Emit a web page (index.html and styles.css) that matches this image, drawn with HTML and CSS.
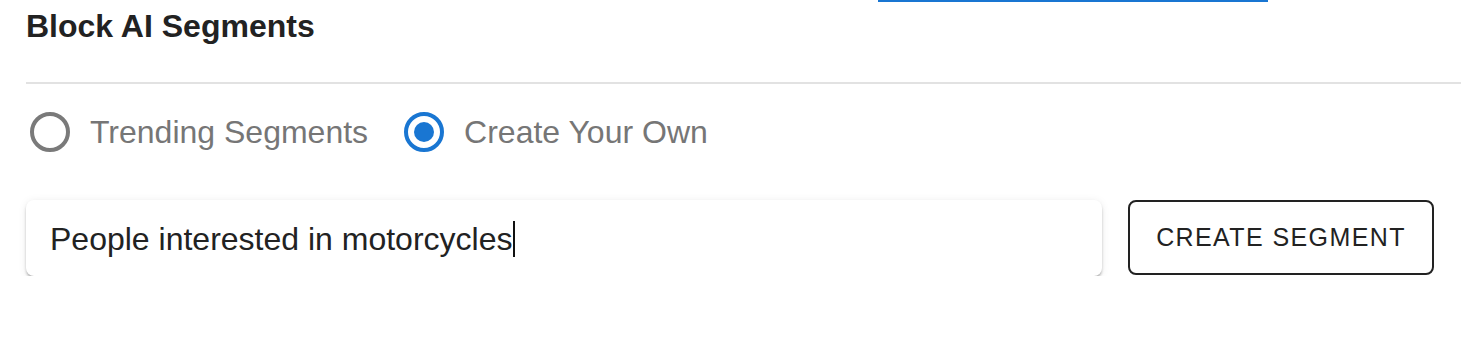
FILE: index.html
```html
<!DOCTYPE html>
<html>
<head>
<meta charset="utf-8">
<link rel="stylesheet" href="styles.css">
</head>
<body>
<div class="page">
  <div class="tabbar"><span class="indicator"></span></div>
  <h2 class="title">Block AI Segments</h2>
  <div class="divider"></div>
  <div class="radios">
    <label class="radio">
      <svg class="radio-icon" viewBox="0 0 24 24" width="48" height="48"><circle cx="12" cy="12" r="9" fill="none" stroke="#7a7a7a" stroke-width="2"/></svg>
      <span class="radio-label">Trending Segments</span>
    </label>
    <label class="radio">
      <svg class="radio-icon" viewBox="0 0 24 24" width="48" height="48"><circle cx="12" cy="12" r="9" fill="none" stroke="#1976d2" stroke-width="2"/><circle cx="12" cy="12" r="5" fill="#1976d2"/></svg>
      <span class="radio-label">Create Your Own</span>
    </label>
  </div>
  <div class="create-row">
    <div class="field"><span class="value">People interested in motorcycles</span><span class="caret"></span></div>
    <button class="btn">CREATE SEGMENT</button>
  </div>
</div>
</body>
</html>
```
FILE: styles.css
```css
html, body {
  margin: 0;
  background: #ffffff;
}
body {
  font-family: "Liberation Sans", Arial, Helvetica, sans-serif;
  color: #222222;
}
.page {
  padding: 0 21px 0 26px;
}
.tabbar {
  height: 2px;
  padding-left: 852px;
}
.indicator {
  display: block;
  width: 390px;
  height: 2px;
  background: #1976d2;
}
.title {
  margin: 6px 0 0 0;
  font-size: 32px;
  line-height: 36px;
  font-weight: 700;
  color: #222222;
}
.divider {
  margin-top: 38px;
  height: 2px;
  background: #e2e2e2;
}
.radios {
  margin-top: 24px;
  display: flex;
  align-items: center;
  height: 48px;
}
.radio {
  display: flex;
  align-items: center;
  gap: 16px;
  margin-right: 32px;
}
.radio-icon {
  display: block;
  flex: none;
}
.radio-label {
  font-size: 32px;
  line-height: 48px;
  color: #767676;
}
.create-row {
  margin-top: 44px;
  display: flex;
  align-items: flex-start;
  gap: 26px;
  padding-right: 27px;
}
.field {
  flex: 1;
  height: 76px;
  border-radius: 8px;
  background: #ffffff;
  box-shadow: 0 3px 3px -1px rgba(0,0,0,0.22), 0 2px 3px 0 rgba(0,0,0,0.12), 0 1px 8px 0 rgba(0,0,0,0.08);
  display: flex;
  align-items: center;
  padding-left: 24px;
  padding-top: 2px;
  box-sizing: border-box;
  font-size: 32px;
  color: #222222;
}
.caret {
  display: inline-block;
  width: 2px;
  height: 36px;
  background: #111111;
  margin-left: 1px;
}
.btn {
  width: 306px;
  height: 75px;
  box-sizing: border-box;
  border: 2px solid #222222;
  border-radius: 8px;
  background: #ffffff;
  font-family: "Liberation Sans", Arial, Helvetica, sans-serif;
  font-size: 25px;
  letter-spacing: 1.4px;
  color: #222222;
  padding: 0;
}
```
